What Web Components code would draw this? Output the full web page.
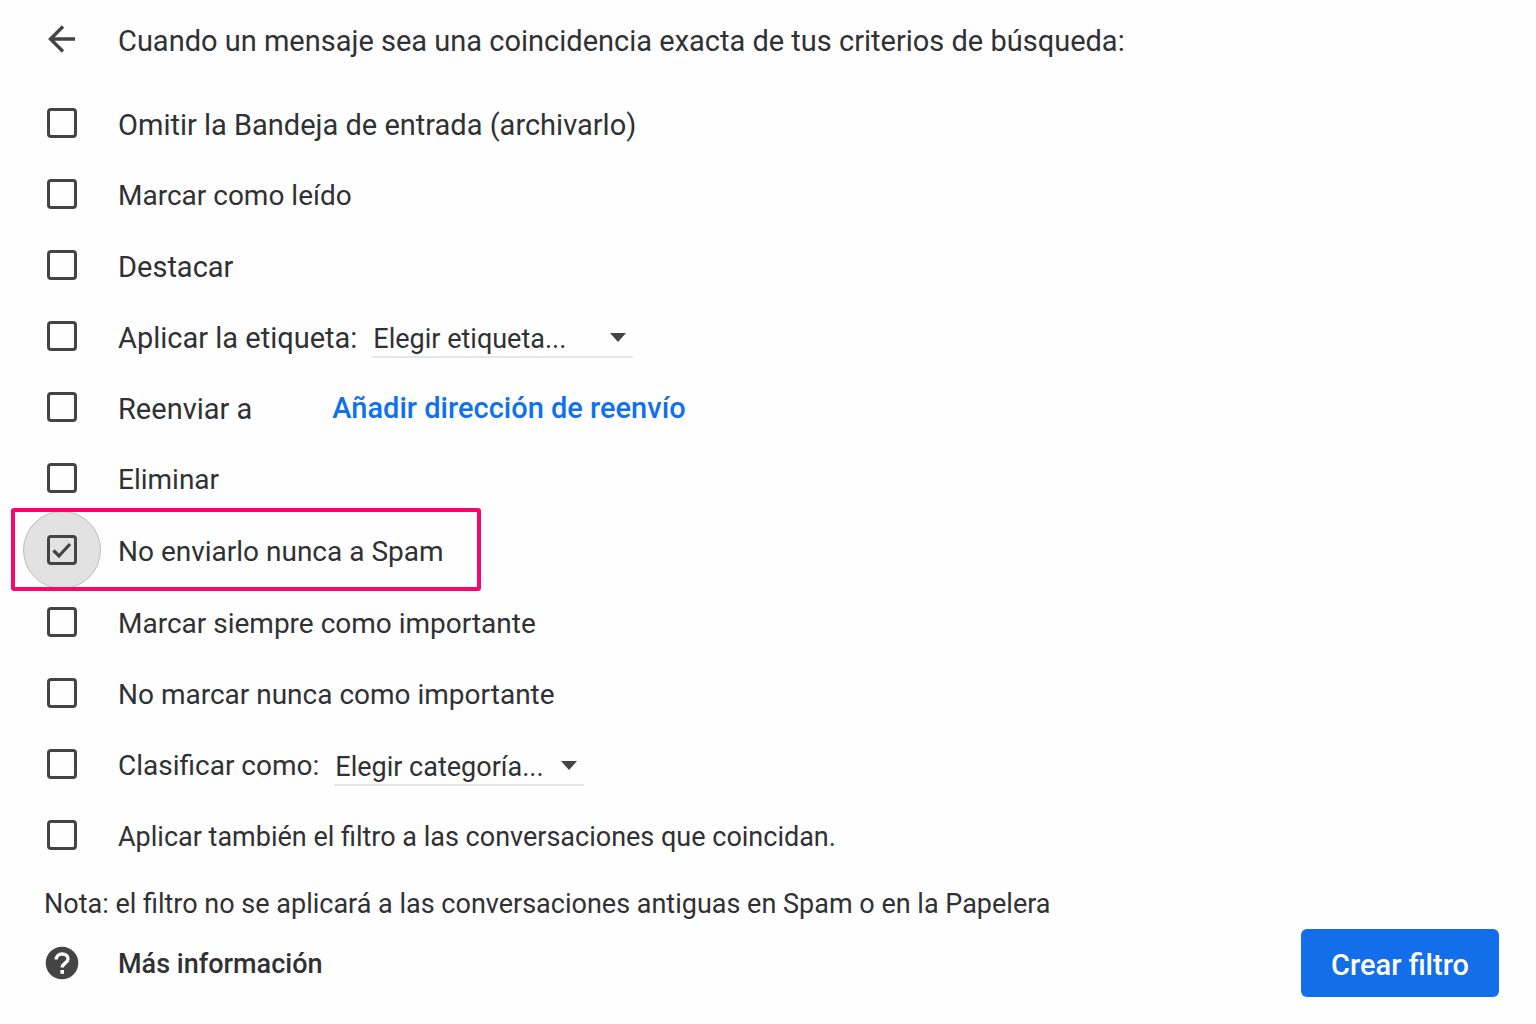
<!DOCTYPE html>
<html lang="es">
<head>
<meta charset="utf-8">
<title>Crear filtro</title>
<style>
  body {
    margin: 0;
    background: #fefefe;
    color: #303134;
    font: 400 29px/36px Roboto, "Open Sans", sans-serif;
  }
</style>
</head>
<body>
<filter-panel></filter-panel>

<template id="filter-panel">
  <style>
    :host { display: block; }
    form { display: flex; flex-direction: column; margin: 0; padding: 0 37px 0 44px; }
    header { display: flex; align-items: center; height: 82px; gap: 38px; }
    h1 { font: inherit; margin: 0; }
    header button { width: 36px; height: 36px; padding: 0; border: 0; background: none; color: #444; display: grid; place-items: center; margin-bottom: 4px; }
    .options { display: flex; flex-direction: column; margin-top: 5px; }
    .medium { font-size: 28px; }
    .small { font-size: 27px; }
    .note { margin: 16px 0 0; }
    footer { display: flex; align-items: center; justify-content: space-between; margin-top: 7px; }
    .forward { margin-left: 65px; padding-top: 2px; font-weight: 500; text-decoration: none; color: #1070f0; }
  </style>
  <form>
    <header>
      <button type="button" aria-label="Volver">
        <svg width="32" height="32" viewBox="0 0 32 32" fill="none" stroke="currentColor" stroke-width="3.400"><path d="M29 16H5M17 3.500L4.500 16L17 28.500"/></svg>
      </button>
      <h1>Cuando un mensaje sea una coincidencia exacta de tus criterios de búsqueda:</h1>
    </header>
    <div class="options">
      <filter-option>Omitir la Bandeja de entrada (archivarlo)</filter-option>
      <filter-option class="medium">Marcar como leído</filter-option>
      <filter-option>Destacar</filter-option>
      <filter-option>Aplicar la etiqueta:<drop-down slot="extra" label="Etiqueta" text="Elegir etiqueta..." class="wide"></drop-down></filter-option>
      <filter-option>Reenviar a<a class="forward" slot="extra" href="#reenvio">Añadir dirección de reenvío</a></filter-option>
      <filter-option class="medium">Eliminar</filter-option>
      <filter-option class="medium" checked highlighted>No enviarlo nunca a Spam</filter-option>
      <filter-option class="medium">Marcar siempre como importante</filter-option>
      <filter-option class="medium">No marcar nunca como importante</filter-option>
      <filter-option class="medium">Clasificar como:<drop-down slot="extra" label="Categoría" text="Elegir categoría..."></drop-down></filter-option>
      <filter-option class="small">Aplicar también el filtro a las conversaciones que coincidan.</filter-option>
    </div>
    <p class="note small">Nota: el filtro no se aplicará a las conversaciones antiguas en Spam o en la Papelera</p>
    <footer>
      <help-link class="small">Más información</help-link>
      <primary-button>Crear filtro</primary-button>
    </footer>
  </form>
</template>

<template id="filter-option">
  <style>
    :host { display: flex; align-items: center; align-self: flex-start; height: 71px; gap: 15px; position: relative; }
    :host([highlighted]) { height: 73px; }
    label { display: flex; align-items: center; gap: 38px; }
    .box { display: grid; place-items: center; width: 36px; height: 36px; position: relative; }
    .box > * { grid-area: 1 / 1; }
    input { appearance: none; box-sizing: border-box; width: 30px; height: 30px; margin: 0; border: 3px solid #444; border-radius: 4px; position: relative; }
    svg { display: none; position: relative; pointer-events: none; }
    input:checked + svg { display: block; }
    .text { padding-top: 4px; }
    .halo, .frame { display: none; }
    :host([highlighted]) .halo { display: block; position: absolute; inset: -21px; border-radius: 50%; background: #e2e2e2; border: 1px solid #bcbcbc; box-sizing: border-box; }
    :host([highlighted]) .frame { display: block; position: absolute; inset: -5px -37px -5px -33px; border: 4px solid #fa0568; border-radius: 3px; pointer-events: none; }
  </style>
  <label>
    <span class="box"><span class="halo"></span><input type="checkbox"><svg width="30" height="30" viewBox="0 0 30 30" fill="none" stroke="#444" stroke-width="3.200"><path d="M6.500 15.500L12 21L23 9"/></svg></span>
    <span class="text"><slot></slot></span>
  </label>
  <slot name="extra"></slot>
  <span class="frame"></span>
</template>

<template id="drop-down">
  <style>
    :host { display: grid; align-items: center; width: 250px; margin-top: 5px; }
    :host(.wide) { width: 261px; }
    select { grid-area: 1 / 1; appearance: none; width: 100%; height: 40px; border: 0; border-bottom: 2px solid #e4e5ea; border-radius: 0; padding: 3px 36px 0 1px; margin: 0; background: none; color: inherit; font: inherit; font-size: 27px; }
    svg { grid-area: 1 / 1; justify-self: end; margin-right: 7px; pointer-events: none; }
  </style>
  <select><option></option></select>
  <svg width="16" height="10" viewBox="0 0 16 10" fill="#444"><path d="M0 0H16L8 9Z"/></svg>
</template>

<template id="help-link">
  <style>
    :host { display: block; }
    a { display: flex; align-items: center; gap: 38px; color: inherit; text-decoration: none; font-weight: 500; }
    span { padding-top: 2px; }
  </style>
  <a href="#ayuda">
    <svg width="36" height="36" viewBox="0 0 36 36"><circle cx="18" cy="18" r="16.300" fill="#444"/><path d="M12.200 14.600C12.200 11.200 14.800 9 18.200 9C21.600 9 24 11 24 13.900C24 17.800 18.200 18.300 18.200 22.400" fill="none" stroke="#fff" stroke-width="3.400"/><rect x="16.400" y="25" width="3.600" height="3.800" fill="#fff"/></svg>
    <span><slot></slot></span>
  </a>
</template>

<template id="primary-button">
  <style>
    :host { display: block; }
    button { height: 68px; padding: 3px 30px 0; border: 0; border-radius: 6px; background: #126fe9; color: #fff; font: inherit; font-weight: 500; }
  </style>
  <button type="button"><slot></slot></button>
</template>

<script>
  class TemplateElement extends HTMLElement {
    constructor() {
      super();
      const template = document.getElementById(this.localName);
      this.attachShadow({ mode: "open" }).append(template.content.cloneNode(true));
    }
  }
  customElements.define("filter-option", class extends TemplateElement {
    connectedCallback() {
      this.shadowRoot.querySelector("input").checked = this.hasAttribute("checked");
    }
  });
  customElements.define("drop-down", class extends TemplateElement {
    connectedCallback() {
      this.shadowRoot.querySelector("select").setAttribute("aria-label", this.getAttribute("label"));
      this.shadowRoot.querySelector("option").textContent = this.getAttribute("text");
    }
  });
  customElements.define("help-link", class extends TemplateElement {});
  customElements.define("primary-button", class extends TemplateElement {});
  customElements.define("filter-panel", class extends TemplateElement {});
</script>
</body>
</html>
